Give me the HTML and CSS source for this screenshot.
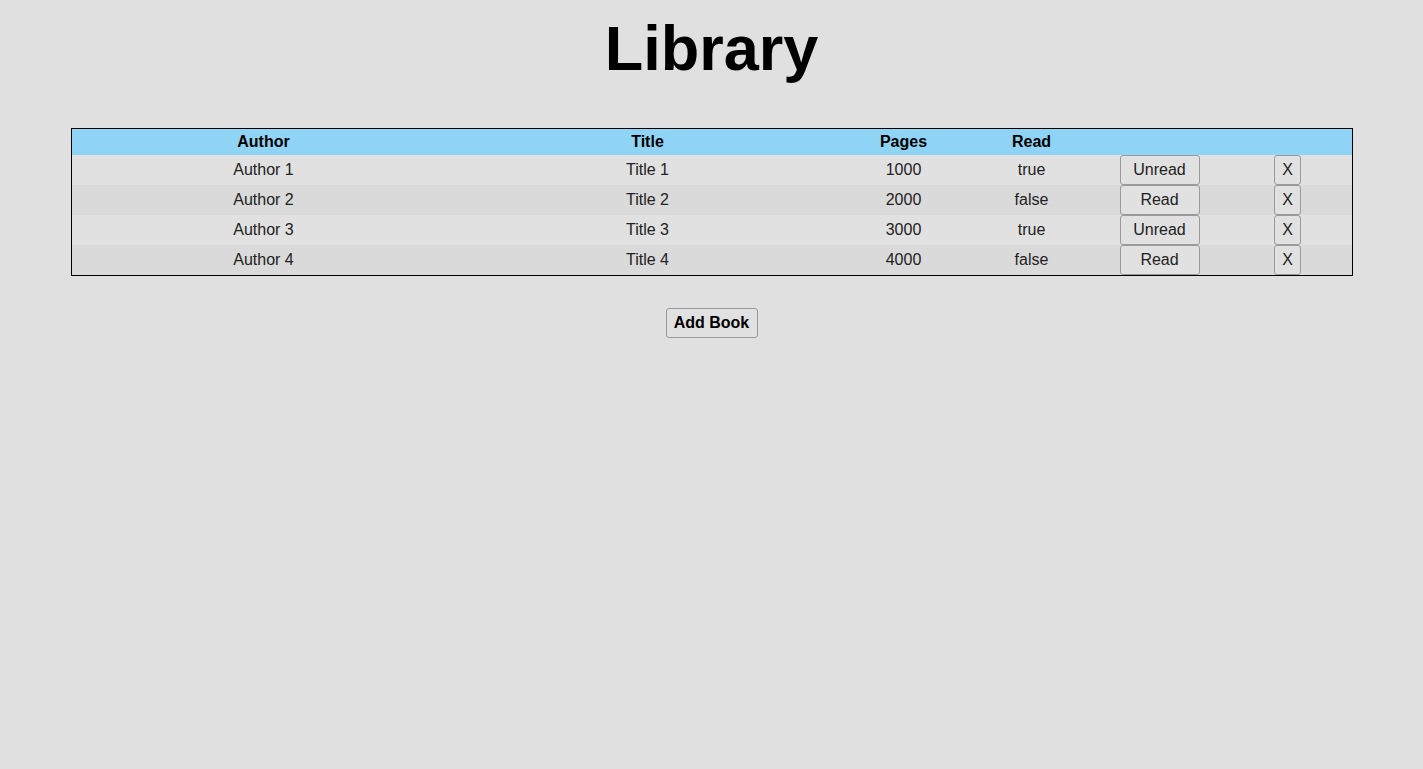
FILE: index.html
```html
<!DOCTYPE html>
<html lang="en">
<head>
<meta charset="utf-8">
<title>Library</title>
<link rel="stylesheet" href="styles.css">
</head>
<body>
<h1 class="title">Library</h1>
<table class="library">
  <thead>
    <tr>
      <th class="c-author">Author</th>
      <th class="c-title">Title</th>
      <th class="c-small">Pages</th>
      <th class="c-small">Read</th>
      <th class="c-small"></th>
      <th class="c-small"></th>
    </tr>
  </thead>
  <tbody>
    <tr>
      <td>Author 1</td><td>Title 1</td><td>1000</td><td>true</td>
      <td><button class="btn toggle">Unread</button></td>
      <td><button class="btn remove">X</button></td>
    </tr>
    <tr>
      <td>Author 2</td><td>Title 2</td><td>2000</td><td>false</td>
      <td><button class="btn toggle">Read</button></td>
      <td><button class="btn remove">X</button></td>
    </tr>
    <tr>
      <td>Author 3</td><td>Title 3</td><td>3000</td><td>true</td>
      <td><button class="btn toggle">Unread</button></td>
      <td><button class="btn remove">X</button></td>
    </tr>
    <tr>
      <td>Author 4</td><td>Title 4</td><td>4000</td><td>false</td>
      <td><button class="btn toggle">Read</button></td>
      <td><button class="btn remove">X</button></td>
    </tr>
  </tbody>
</table>
<div class="actions">
  <button class="btn add">Add Book</button>
</div>
</body>
</html>
```

FILE: styles.css
```css
html, body {
  margin: 0;
  padding: 0;
  background: #e0e0e0;
  font-family: "Liberation Sans", Arial, sans-serif;
  color: #222;
}

body {
  padding-top: 11px;
}

.title {
  margin: 0 0 43px;
  font-size: 63px;
  font-weight: bold;
  text-align: center;
  color: #000;
  line-height: 74px;
}

.library {
  width: 1282px;
  margin: 0 auto;
  border: 1px solid #000;
  border-collapse: separate;
  border-spacing: 0;
  table-layout: fixed;
  font-size: 16px;
}

.c-author, .c-title { width: 384px; }
.c-small { width: 128px; }

.library th {
  background: #8fd4f5;
  color: #000;
  font-weight: bold;
  height: 26px;
  padding: 0;
  text-align: center;
}

.library td {
  height: 30px;
  padding: 0;
  text-align: center;
  color: #222;
}

.library tbody tr:nth-child(odd) td { background: #e1e1e1; }
.library tbody tr:nth-child(even) td { background: #dadada; }

.btn {
  font-family: "Liberation Sans", Arial, sans-serif;
  font-size: 16px;
  color: #222;
  background: #e1e1e1;
  border: 1px solid #9a9a9a;
  border-radius: 3px;
  height: 30px;
  padding: 0;
  margin: 0;
  vertical-align: middle;
  display: inline-block;
}

.toggle { width: 80px; }
.remove { width: 27px; }

.actions {
  display: flex;
  justify-content: center;
  padding-top: 32px;
}

.add {
  width: 92px;
  font-weight: bold;
  color: #000;
}
```
